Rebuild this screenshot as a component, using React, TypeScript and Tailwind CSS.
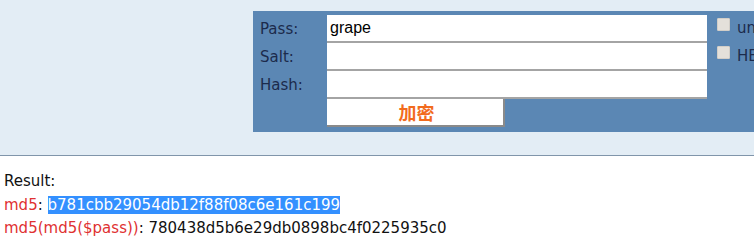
export default function App() {
  const rows = [
    { label: "Pass:", value: "grape", check: "unicode" },
    { label: "Salt:", value: "", check: "HEX" },
    { label: "Hash:", value: "", check: "" },
  ];

  return (
    <div className="w-[754px] h-[243px] overflow-hidden bg-white font-['DejaVu_Sans',sans-serif]">
      <div className="h-[156px] bg-[#e3edf5] border-b border-[#8095aa] pt-[11px] pl-[253px]">
        <div className="w-[560px] h-[121px] bg-[#5b87b4] pt-[4px] grid grid-cols-[74px_380px_1fr] auto-rows-[28px]">
          {rows.map((r) => (
            <div key={r.label} className="contents">
              <div className="pl-[7px] flex items-center text-[15px] text-[#1c2b4c]">{r.label}</div>
              <input
                readOnly
                value={r.value}
                className="h-[28px] w-[380px] bg-white border-0 border-b-2 border-[#a4a4a4] pl-[3px] text-[16px] text-black font-['Liberation_Sans',sans-serif] outline-none"
              />
              <div className="flex items-start pt-[3px] pl-[10px]">
                {r.check && (
                  <>
                    <span className="block w-[13px] h-[13px] bg-[#e4e0da] border border-[#d2cec8] rounded-[1px]" />
                    <span className="ml-[7px] -mt-[3px] leading-[26px] text-[15px] text-[#1c2b4c] whitespace-nowrap">
                      {r.check}
                    </span>
                  </>
                )}
              </div>
            </div>
          ))}
          <div />
          <button className="h-[28px] w-[178px] bg-white border-b-2 border-r-2 border-[#8a8a8a] pl-[3px] text-[18px] font-bold text-[#f26b1d] font-['Noto_Sans_CJK_SC',sans-serif] leading-none">
            加密
          </button>
          <div />
        </div>
      </div>
      <div className="pt-[14px] pl-[4px] text-[15px] leading-[23.5px] text-[#111]">
        <div>Result:</div>
        <div>
          <span className="text-[#e03131]">md5</span>:{" "}
          <span className="bg-[#3390ff] text-white">b781cbb29054db12f88f08c6e161c199</span>
        </div>
        <div>
          <span className="text-[#e03131]">md5(md5($pass))</span>: 780438d5b6e29db0898bc4f0225935c0
        </div>
      </div>
    </div>
  );
}
